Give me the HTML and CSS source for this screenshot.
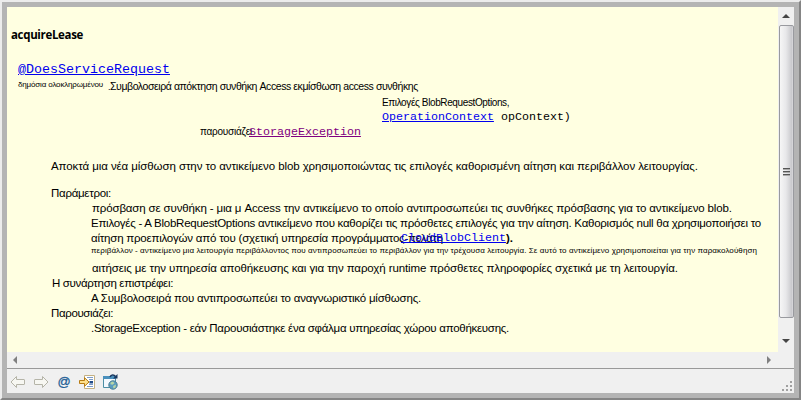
FILE: index.html
```
<!DOCTYPE html>
<html lang="el">
<head>
<meta charset="utf-8">
<title>acquireLease</title>
<link rel="stylesheet" href="styles.css">
</head>
<body>
<div class="window">
  <div class="view">
    <main class="doc">
      <h1>acquireLease</h1>
      <div class="annotation"><a href="#">@DoesServiceRequest</a></div>
      <div class="signature"><span class="modifier">δημόσια ολοκληρωμένου</span><span class="dot">.</span><span class="sig">Συμβολοσειρά απόκτηση συνθήκη Access εκμίσθωση access συνθήκης</span></div>
      <div class="options">Επιλογές BlobRequestOptions,</div>
      <div class="context"><a href="#">OperationContext</a> opContext)</div>
      <div class="throws"><span>παρουσιάζει</span><a class="visited" href="#">StorageException</a></div>
      <p class="summary">Αποκτά μια νέα μίσθωση στην το αντικείμενο blob χρησιμοποιώντας τις επιλογές καθορισμένη αίτηση και περιβάλλον λειτουργίας.</p>
      <dl>
        <dt class="params">Παράμετροι:</dt>
        <dd class="access">πρόσβαση σε συνθήκη - μια μ Access την αντικείμενο το οποίο αντιπροσωπεύει τις συνθήκες πρόσβασης για το αντικείμενο blob.</dd>
        <dd class="opts">Επιλογές - Α BlobRequestOptions αντικείμενο που καθορίζει τις πρόσθετες επιλογές για την αίτηση. Καθορισμός null θα χρησιμοποιήσει το</dd>
        <dd class="defaults"><span>αίτηση προεπιλογών από του (σχετική υπηρεσία προγράμματος-πελάτη</span><a href="#">CloudBlobClient</a><b>).</b></dd>
        <dd class="note">περιβάλλον - αντικείμενο μια λειτουργία περιβάλλοντος που αντιπροσωπεύει το περιβάλλον για την τρέχουσα λειτουργία. Σε αυτό το αντικείμενο χρησιμοποιείται για την παρακολούθηση</dd>
        <dd class="tracking">αιτήσεις με την υπηρεσία αποθήκευσης και για την παροχή runtime πρόσθετες πληροφορίες σχετικά με τη λειτουργία.</dd>
        <dt class="returns">Η συνάρτηση επιστρέφει:</dt>
        <dd class="lease">Α Συμβολοσειρά που αντιπροσωπεύει το αναγνωριστικό μίσθωσης.</dd>
        <dt class="raises">Παρουσιάζει:</dt>
        <dd class="error">.StorageException - εάν Παρουσιάστηκε ένα σφάλμα υπηρεσίας χώρου αποθήκευσης.</dd>
      </dl>
    </main>
    <div class="vbar"><i class="up"></i><div class="thumb"><span></span><span></span><span></span></div><i class="down"></i></div>
  </div>
  <div class="hbar"><i class="left"></i><i class="right"></i></div>
  <footer>
    <svg class="icon" viewBox="0 0 16 16"><path d="M1 8 6.500 2.500v3H14q.5 0 .5.500v4q0 .5-.5.500H6.500v3z" fill="#f7f7f2" stroke="#b5b4a8"/></svg>
    <svg class="icon" viewBox="0 0 16 16"><path d="M15 8 9.500 2.500v3H2q-.5 0-.5.500v4q0 .5.500.500h7.500v3z" fill="#f7f7f2" stroke="#b5b4a8"/></svg>
    <span class="at">@</span>
    <svg class="icon" viewBox="0 0 16 16"><path d="M5.500 1.500h10v13h-10z" fill="#fff" stroke="#c4b184"/><path d="M8 3.500h6M10 5.500h4M10 10.500h4M8 12.500h6" stroke="#7d9cc9"/><path d="M10.500 7H14v2.500h-3.500z" fill="#204a87"/><path d="M.5 6.500h5V3.700L10 8l-4.500 4.300V9.500h-5z" fill="#ffe08a" stroke="#b67b13"/></svg>
    <svg class="icon" viewBox="0 0 16 16"><path d="M1.500 2.500h12v11h-12z" fill="#f4f9ff" stroke="#4d8fa5"/><path d="M1 2h13v3H1z" fill="#4a90bd"/><path d="M8 3C9 .5 12 .5 13.500 2.500" fill="none" stroke="#17365f" stroke-width="1.500"/><path d="M15.500 0v4.500H11z" fill="#17365f"/><circle cx="11" cy="11" r="4.200" fill="#5b9bc0" stroke="#4c7f91"/><path d="M8.500 8.500 11 7.500l1.500 1.800-2 1.500-2-.5zM11 12l3-1.500-.5 3-2 1z" fill="#b9d6a5"/></svg>
    <svg class="grip" viewBox="0 0 12 12"><path d="M9 1h2v2H9zM5 5h2v2H5zM9 5h2v2H9zM1 9h2v2H1zM5 9h2v2H5zM9 9h2v2H9z" fill="#a0a0a0"/></svg>
  </footer>
</div>
</body>
</html>
```

FILE: styles.css
```
* { box-sizing: border-box; }
body { margin: 0; }
.window {
  width: 801px;
  height: 400px;
  padding: 5px;
  border: 2px solid #ececec;
  border-right-color: #858585;
  border-bottom-color: #858585;
  background: #b4b4b4;
  display: flex;
  flex-direction: column;
  font: 11.5px/15px "Liberation Sans", sans-serif;
  color: #000;
  white-space: nowrap;
}
.view { display: flex; height: 345px; }
.doc { flex: 1; min-width: 0; padding: 20px 0 0 4px; background: #ffffe1; overflow: hidden; }
a { color: #0000ee; }
a.visited { color: #800080; }
h1 { margin: 0 0 19px; font: bold 11.5px/16px "Open Sans", sans-serif; letter-spacing: -.33px; }
.annotation { height: 16px; margin-left: 7px; font: 13.33px/16px "Liberation Mono", monospace; }
.signature { display: flex; height: 18px; margin-left: 7px; line-height: 17px; }
.modifier { width: 90px; font-size: 8px; line-height: 13px; letter-spacing: -.16px; }
.dot { width: 2px; font-size: 9px; line-height: 19px; }
.sig { font-size: 10.5px; letter-spacing: -.42px; }
.options { height: 14px; margin-left: 371px; font-size: 10px; line-height: 14px; letter-spacing: -.38px; }
.context { height: 15px; margin-left: 371px; font: 11.67px/14px "Liberation Mono", monospace; }
.throws { display: flex; height: 15px; margin-left: 189px; line-height: 14px; }
.throws span { width: 49px; font-size: 10px; letter-spacing: -.23px; }
.throws a { font: 11.67px/15px "Liberation Mono", monospace; }
.summary { margin: 19px 0 12px 40px; letter-spacing: -.087px; }
dl { margin: 0 0 0 40px; }
dt, dd { height: 15px; }
dd { margin-left: 40px; }
.params { letter-spacing: -.284px; }
.access { padding-left: 1px; letter-spacing: -.146px; }
.opts { letter-spacing: -.252px; }
.defaults { display: flex; }
.defaults span { width: 310px; letter-spacing: -.216px; }
.defaults a { font: 11.67px/14px "Liberation Mono", monospace; }
.note { font-size: 8px; line-height: 9px; letter-spacing: .08px; }
.tracking { padding-left: 1px; letter-spacing: -.095px; }
.returns { padding-left: 1px; letter-spacing: -.328px; }
.lease { letter-spacing: -.204px; }
.raises { letter-spacing: -.37px; }
.error { letter-spacing: -.274px; }
.vbar {
  width: 16px;
  display: flex;
  flex-direction: column;
  align-items: center;
  background: #f0f0f0;
}
.vbar i, .hbar i { width: 0; height: 0; border: 4px solid transparent; }
.vbar .up { margin-top: 3px; border-bottom-color: #454545; }
.vbar .down { margin-top: 21px; border-top-color: #454545; }
.thumb {
  width: 15px;
  height: 293px;
  margin-top: 7px;
  border: 1px solid #999a9f;
  border-radius: 2px;
  background: linear-gradient(90deg, #f6f6f6, #e8e8ea 45%, #c9c9cd 90%, #dcdcdf);
  display: flex;
  flex-direction: column;
  align-items: center;
  justify-content: center;
  gap: 1px;
}
.thumb span { width: 7px; height: 2px; border-top: 1px solid #555; background: #aaa; }
.hbar {
  height: 16px;
  display: flex;
  justify-content: space-between;
  align-items: center;
  padding: 0 19px 0 2px;
  background: #f0f0f0;
}
.hbar .left { border-right-color: #808080; }
.hbar .right { border-left-color: #808080; }
footer {
  flex: 1;
  display: flex;
  align-items: center;
  gap: 7px;
  padding: 1px 1px 0 3px;
  border-top: 1px solid #999;
  background: #f0f0f0;
}
.icon { width: 16px; height: 16px; }
.at { width: 16px; text-align: center; font-size: 13px; color: #1f5f96; -webkit-text-stroke: .3px #1f5f96; }
.grip { width: 12px; height: 12px; margin: 9px 0 0 auto; }
```
